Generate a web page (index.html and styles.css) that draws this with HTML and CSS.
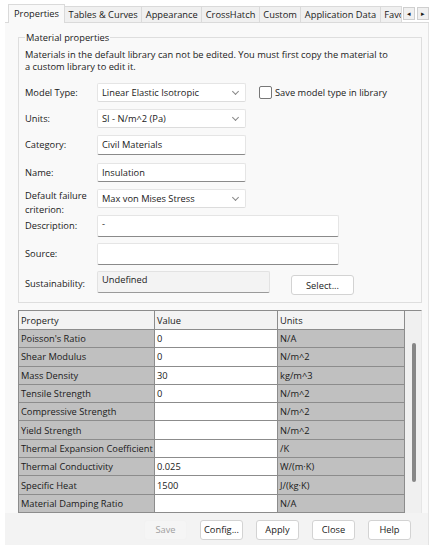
FILE: index.html
```html
<!DOCTYPE html>
<html lang="en">
<head>
  <meta charset="UTF-8">
  <title>Material</title>
  <link rel="stylesheet" href="styles.css">
</head>
<body>
  <div class="dialog">
    <div class="tabs">
      <div class="tab active">Properties</div>
      <div class="tab">Tables &amp; Curves</div>
      <div class="tab">Appearance</div>
      <div class="tab">CrossHatch</div>
      <div class="tab">Custom</div>
      <div class="tab">Application Data</div>
      <div class="tab clipped">Favorites</div>
      <div class="tab-arrows">
        <span class="arrow">&#9666;</span>
        <span class="arrow">&#9656;</span>
      </div>
    </div>

    <div class="page">
      <fieldset class="group">
        <legend>Material properties</legend>
        <p class="note">Materials in the default library can not be edited. You must first copy the material to<br>a custom library to edit it.</p>

        <div class="form">
          <div class="row">
            <label>Model Type:</label>
            <div class="select">Linear Elastic Isotropic</div>
            <div class="check"><span class="box"></span>Save model type in library</div>
          </div>
          <div class="row">
            <label>Units:</label>
            <div class="select">SI - N/m^2 (Pa)</div>
          </div>
          <div class="row tall">
            <label class="l20">Category:</label>
            <div class="input">Civil Materials</div>
          </div>
          <div class="row">
            <label>Name:</label>
            <div class="input">Insulation</div>
          </div>
          <div class="row">
            <label class="two-line">Default failure criterion:</label>
            <div class="select">Max von Mises Stress</div>
          </div>
          <div class="row tall">
            <label class="l22">Description:</label>
            <div class="input wide">-</div>
          </div>
          <div class="row tall">
            <label class="l22">Source:</label>
            <div class="input wide"></div>
          </div>
          <div class="row last">
            <label class="l26">Sustainability:</label>
            <div class="readonly">Undefined</div>
            <button class="btn select-btn">Select...</button>
          </div>
        </div>
      </fieldset>

      <div class="grid">
        <div class="grid-body">
          <table>
            <thead>
              <tr><th>Property</th><th>Value</th><th>Units</th></tr>
            </thead>
            <tbody>
              <tr><td>Poisson's Ratio</td><td class="val">0</td><td>N/A</td></tr>
              <tr><td>Shear Modulus</td><td class="val">0</td><td>N/m^2</td></tr>
              <tr><td>Mass Density</td><td class="val">30</td><td>kg/m^3</td></tr>
              <tr><td>Tensile Strength</td><td class="val">0</td><td>N/m^2</td></tr>
              <tr><td>Compressive Strength</td><td class="val"></td><td>N/m^2</td></tr>
              <tr><td>Yield Strength</td><td class="val"></td><td>N/m^2</td></tr>
              <tr><td>Thermal Expansion Coefficient</td><td class="val"></td><td>/K</td></tr>
              <tr><td>Thermal Conductivity</td><td class="val">0.025</td><td>W/(m·K)</td></tr>
              <tr><td>Specific Heat</td><td class="val">1500</td><td>J/(kg·K)</td></tr>
              <tr><td>Material Damping Ratio</td><td class="val"></td><td>N/A</td></tr>
            </tbody>
          </table>
        </div>
        <div class="vscroll"><div class="thumb"></div></div>
      </div>
    </div>

    <div class="footer">
      <button class="btn" disabled>Save</button>
      <button class="btn">Config...</button>
      <button class="btn">Apply</button>
      <button class="btn">Close</button>
      <button class="btn">Help</button>
    </div>
  </div>
</body>
</html>
```

FILE: styles.css
```css
body {
  margin: 0;
  background-color: #fff;
  font-family: 'Segoe UI', 'Open Sans', sans-serif;
  font-size: 9.3px;
  color: #1a1a1a;
}
.dialog {
  margin: 5px 0 0 5px;
  width: 424px;
  height: 540px;
  background-color: #f3f3f3;
  display: flex;
  flex-direction: column;
}
.tabs {
  display: flex;
  align-items: flex-end;
  height: 17px;
  flex-shrink: 0;
  background-color: #fff;
  border-bottom: 1px solid #dadada;
  padding-left: 3px;
}
.tab {
  height: 15px;
  line-height: 15px;
  padding: 0 3.5px;
  background-color: #f0f0f0;
  border: 1px solid #dadada;
  border-bottom: none;
  border-left: none;
  white-space: nowrap;
}
.tab.active {
  height: 18px;
  line-height: 17px;
  margin-bottom: -1px;
  background-color: #f9f9f9;
  border-left: 1px solid #dadada;
  padding: 0 5px;
}
.tab.clipped {
  width: 18px;
  overflow: hidden;
}
.tab-arrows {
  display: flex;
  gap: 2px;
  margin-left: 1px;
  margin-bottom: 2px;
}
.arrow {
  width: 10px;
  height: 11px;
  line-height: 11px;
  font-size: 7px;
  text-align: center;
  background-color: #f0f0f0;
  border: 1px solid #cfcfcf;
}
.page {
  flex: 1;
  background-color: #f9f9f9;
  border-right: 1px solid #e4e4e4;
  padding: 8px 6px 0 13px;
  display: flex;
  flex-direction: column;
}
.group {
  margin: 0;
  padding: 0 6px 9px 6px;
  border: 1px solid #dedede;
}
.group legend {
  padding: 0 1px;
}
.note {
  margin: 5px 0 0 0;
  line-height: 12px;
}
.form {
  display: flex;
  flex-direction: column;
  margin-top: 10px;
}
.row {
  display: flex;
  align-items: flex-start;
  height: 26px;
}
.row.tall {
  height: 28px;
}
.row.last {
  height: 22px;
}
.row label {
  width: 72px;
  flex-shrink: 0;
  line-height: 19px;
}
.row label.l20 { line-height: 20px; }
.row label.l22 { line-height: 22px; }
.row label.l26 { line-height: 26px; }
.row label.two-line {
  line-height: 14px;
}
.select,
.input,
.readonly {
  box-sizing: border-box;
  width: 149px;
  height: 19px;
  line-height: 18px;
  padding: 0 4px;
  background-color: #fff;
  border: 1px solid #e5e5e5;
  border-bottom-color: #8a8a8a;
  border-radius: 2px;
  white-space: nowrap;
}
.row.tall .input {
  height: 20px;
}
.select {
  position: relative;
  border-bottom-color: #dcdcdc;
}
.select::after {
  content: '';
  position: absolute;
  right: 7px;
  top: 5px;
  width: 4px;
  height: 4px;
  border-right: 1px solid #888;
  border-bottom: 1px solid #888;
  transform: rotate(45deg);
}
.row.tall .input.wide {
  width: 242px;
  height: 22px;
  line-height: 16px;
}
.readonly {
  width: 173px;
  height: 22px;
  line-height: 16px;
  background-color: #f3f3f3;
  border-color: #e2e2e2;
  border-bottom-color: #9a9a9a;
}
.check {
  display: flex;
  align-items: center;
  height: 19px;
  margin-left: 13px;
}
.check .box {
  width: 11px;
  height: 11px;
  border: 1px solid #777;
  border-radius: 2px;
  background-color: #fff;
  margin-right: 3px;
}
.btn {
  font-family: inherit;
  font-size: 9.3px;
  color: #1a1a1a;
  height: 20px;
  width: 43px;
  padding: 0;
  background-color: #fff;
  border: 1px solid #d3d3d3;
  border-radius: 3px;
}
.btn:disabled {
  color: #a0a0a0;
  background-color: #f5f5f5;
  border-color: #f2f2f2;
}
.select-btn {
  width: 63px;
  margin-left: 21px;
  margin-top: 4px;
}
.grid {
  flex: 1;
  display: flex;
  margin-top: 7px;
  background-color: #f0f0f0;
  border-top: 1px solid #8c8c8c;
  border-right: 1px solid #e6e6e6;
  overflow: hidden;
}
.grid-body {
  width: 387px;
  overflow: hidden;
}
.grid table {
  width: 100%;
  border-collapse: collapse;
  table-layout: fixed;
}
.grid th,
.grid td {
  height: 17.3px;
  padding: 0 2px;
  text-align: left;
  font-weight: normal;
  border: 1px solid #8c8c8c;
  white-space: nowrap;
  overflow: hidden;
}
.grid th {
  height: 18px;
  background-color: #f3f3f3;
  border-top: none;
}
.grid th:nth-child(1) { width: 131px; }
.grid th:nth-child(2) { width: 118px; }
.grid td {
  background-color: #c0c0c0;
}
.grid td.val {
  background-color: #fff;
}
.vscroll {
  flex: 1;
  position: relative;
}
.thumb {
  position: absolute;
  left: 7px;
  top: 32px;
  width: 4px;
  height: 139px;
  background-color: #878787;
  border-radius: 2px;
}
.footer {
  display: flex;
  justify-content: flex-end;
  gap: 13px;
  height: 34px;
  flex-shrink: 0;
  align-items: center;
  padding-right: 17px;
  background-color: #f3f3f3;
  border-right: 1px solid #e4e4e4;
}
```
